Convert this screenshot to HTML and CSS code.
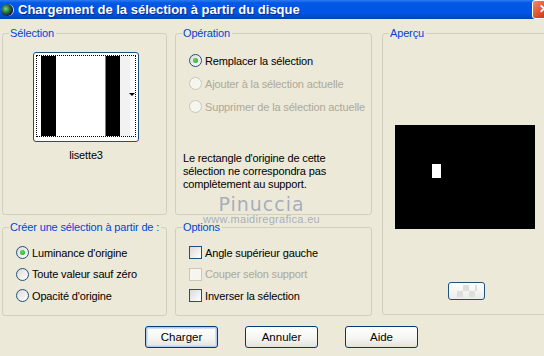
FILE: index.html
```html
<!DOCTYPE html>
<html lang="fr">
<head>
    <meta charset="UTF-8">
    <title>Chargement de la sélection à partir du disque</title>
    <link rel="stylesheet" href="styles.css">
</head>
<body>

    <div class="window">
        <div class="titlebar">
            <span class="app-icon"></span>
            <span class="title">Chargement de la sélection à partir du disque</span>
            <span class="close">&#x2715;</span>
        </div>

        <div class="content">
            <fieldset class="box box-selection">
                <legend>Sélection</legend>
                <div class="thumb">
                    <div class="thumb-inner">
                        <span class="bar bar-black"></span>
                        <span class="bar bar-white"></span>
                        <span class="bar bar-black bar-right"></span>
                        <span class="bar bar-grey"></span>
                    </div>
                    <span class="thumb-arrow"></span>
                </div>
                <div class="thumb-name">lisette3</div>
            </fieldset>

            <fieldset class="box box-operation">
                <legend>Opération</legend>
                <div class="choices">
                    <div class="choice"><span class="radio checked"></span>Remplacer la sélection</div>
                    <div class="choice disabled"><span class="radio"></span>Ajouter à la sélection actuelle</div>
                    <div class="choice disabled"><span class="radio"></span>Supprimer de la sélection actuelle</div>
                </div>
                <p class="note">Le rectangle d'origine de cette<br>sélection ne correspondra pas<br>complètement au support.</p>
            </fieldset>

            <fieldset class="box box-preview">
                <legend>Aperçu</legend>
                <div class="preview">
                    <span class="preview-spot"></span>
                </div>
                <div class="checker-btn"><span class="checker"></span></div>
            </fieldset>

            <fieldset class="box box-create">
                <legend>Créer une sélection à partir de :</legend>
                <div class="choices small">
                    <div class="choice"><span class="radio checked"></span>Luminance d'origine</div>
                    <div class="choice"><span class="radio"></span>Toute valeur sauf zéro</div>
                    <div class="choice"><span class="radio"></span>Opacité d'origine</div>
                </div>
            </fieldset>

            <fieldset class="box box-options">
                <legend>Options</legend>
                <div class="choices small">
                    <div class="choice"><span class="check"></span>Angle supérieur gauche</div>
                    <div class="choice disabled"><span class="check"></span>Couper selon support</div>
                    <div class="choice"><span class="check"></span>Inverser la sélection</div>
                </div>
            </fieldset>
        </div>

        <div class="buttons">
            <button class="default">Charger</button>
            <button>Annuler</button>
            <button>Aide</button>
        </div>

        <div class="watermark">
            <div class="wm-name">Pinuccia</div>
            <div class="wm-url">www.maidiregrafica.eu</div>
        </div>
    </div>

</body>
</html>
```

FILE: styles.css
```css
body {
    margin: 0;
    background-color: #ece9d8;
    font-family: "Liberation Sans", Arial, sans-serif;
    font-size: 11px;
    color: #000;
    overflow: hidden;
}

.window {
    position: relative;
    width: 544px;
    height: 356px;
    overflow: hidden;
}

/* title bar */
.titlebar {
    height: 19px;
    display: flex;
    align-items: center;
    background: linear-gradient(#2b7af0 0, #0058e6 3px, #0055e5 13px, #0049cc 17px, #003fb4 19px);
}

.app-icon {
    width: 12px;
    height: 12px;
    margin: 0 5px 0 1px;
    border-radius: 50%;
    background: radial-gradient(circle at 40% 40%, #7fd47a 0, #2d7a3e 35%, #1b1b3a 70%);
    box-shadow: 1px 0 0 #c8d8f8;
}

.title {
    flex: 1;
    color: #fff;
    font-family: "Liberation Sans", Arial, sans-serif;
    font-weight: bold;
    font-size: 13px;
    text-shadow: 1px 1px 0 #0a2a8a;
    white-space: nowrap;
}

.close {
    width: 21px;
    height: 17px;
    margin-right: -11px;
    border: 1px solid #fff;
    border-radius: 3px;
    background: linear-gradient(135deg, #f08a6a, #d8431d 60%, #c13a15);
    color: #fff;
    font-weight: bold;
    font-size: 12px;
    line-height: 17px;
    text-align: center;
}

/* group boxes */
.content {
    display: grid;
    grid-template-columns: 165px 197px 172px;
    grid-template-rows: 188px 95px;
    column-gap: 8px;
    row-gap: 6px;
    padding: 8px 0 0 2px;
    letter-spacing: -0.15px;
}

.box {
    margin: 0;
    padding: 0;
    border: 1px solid #d0d0bf;
    border-radius: 3px;
    min-width: 0;
}

.box legend {
    margin-left: 6px;
    padding: 0 2px 0 1px;
    color: #0046d5;
    font-size: 11px;
    line-height: 13px;
    white-space: nowrap;
}

.box-preview {
    grid-column: 3;
    grid-row: 1 / 3;
    margin-left: 2px;
    margin-bottom: 1px;
}

.box-create {
    grid-column: 1;
    grid-row: 2;
}

.box-options {
    grid-column: 2;
    grid-row: 2;
}

/* selection thumbnail */
.box-selection {
    display: flex;
    flex-direction: column;
    align-items: center;
}

.thumb {
    position: relative;
    width: 100px;
    height: 84px;
    margin-top: 12px;
    margin-left: 3px;
    border: 1px solid #1c5180;
    border-radius: 3px;
    background-color: #fff;
    padding: 2px;
    box-sizing: content-box;
}

.thumb-inner {
    display: flex;
    height: 80px;
    border: 1px dotted #000;
    padding: 0 3px 0 4px;
}

.bar {
    height: 100%;
}

.bar-black {
    width: 15px;
    background-color: #000;
}

.bar-white {
    width: 49px;
    background-color: #fff;
    border-right: 1px solid #808080;
}

.bar-right {
    width: 14px;
}

.bar-grey {
    width: 10px;
    background-color: #f2f2f2;
}

.thumb-arrow {
    position: absolute;
    right: 3px;
    top: 40px;
    border-left: 3px solid transparent;
    border-right: 3px solid transparent;
    border-top: 3px solid #000;
}

.thumb-name {
    margin-top: 7px;
    margin-left: 3px;
    font-size: 11px;
}

/* radios and checkboxes */
.choices {
    padding: 9px 0 0 13px;
}

.choice {
    display: flex;
    align-items: center;
    height: 23px;
    font-size: 11px;
    white-space: nowrap;
}

.choices.small {
    padding-top: 8px;
}

.choices.small .choice {
    height: 21.5px;
}

.choice.disabled {
    color: #aca899;
}

.radio {
    flex: none;
    width: 11px;
    height: 11px;
    margin-right: 3px;
    border: 1px solid #1c5180;
    border-radius: 50%;
    background: linear-gradient(135deg, #dcdad5, #fff);
    display: flex;
    align-items: center;
    justify-content: center;
}

.radio.checked::after {
    content: "";
    width: 5px;
    height: 5px;
    border-radius: 50%;
    background: radial-gradient(circle at 40% 40%, #5fdc5f, #21a121);
}

.disabled .radio,
.disabled .check {
    border-color: #cac8bb;
    background: #f6f5ef;
}

.check {
    flex: none;
    width: 11px;
    height: 11px;
    margin-right: 3px;
    border: 1px solid #1c5180;
    background: linear-gradient(135deg, #dcdad5, #fff);
}

.note {
    margin: 34px 4px 0 7px;
    font-size: 11px;
    line-height: 13px;
    white-space: nowrap;
}

/* preview */
.preview {
    position: relative;
    width: 140px;
    height: 104px;
    margin: 85px 0 0 12px;
    background-color: #000;
}

.preview-spot {
    position: absolute;
    left: 37px;
    top: 39px;
    width: 9px;
    height: 14px;
    background-color: #fff;
}

.checker-btn {
    width: 35px;
    height: 16px;
    margin: 53px 0 0 65px;
    border: 1px solid #1c5180;
    border-radius: 3px;
    background: linear-gradient(#fff, #ecebe6);
    display: flex;
    align-items: center;
    justify-content: center;
}

.checker {
    width: 20px;
    height: 12px;
    background-image: linear-gradient(45deg, #dedede 25%, transparent 25%, transparent 75%, #dedede 75%),
        linear-gradient(45deg, #dedede 25%, transparent 25%, transparent 75%, #dedede 75%);
    background-size: 12px 12px;
    background-position: 0 0, 6px 6px;
}

/* buttons */
.buttons {
    display: flex;
    gap: 27px;
    padding: 10px 0 0 145px;
}

button {
    width: 73px;
    height: 22px;
    padding: 0;
    border: 1px solid #003c74;
    border-radius: 3px;
    background: linear-gradient(#fff, #f4f4f0 60%, #e3e2da);
    font-family: "Liberation Sans", Arial, sans-serif;
    font-size: 11.5px;
    color: #000;
}

button.default {
    box-shadow: inset 0 0 0 1px #aecbf7, inset 0 0 0 2px #d0e0fa;
}

/* watermark over the dialog */
.watermark {
    position: absolute;
    left: 199px;
    top: 193px;
    width: 125px;
    text-align: center;
    color: rgba(110, 120, 160, 0.55);
    pointer-events: none;
}

.wm-name {
    font-family: "DejaVu Sans", sans-serif;
    font-size: 19px;
    letter-spacing: 1px;
    line-height: 22px;
}

.wm-url {
    font-size: 11px;
    line-height: 12px;
    letter-spacing: 0.3px;
    margin-top: -2px;
}
```
